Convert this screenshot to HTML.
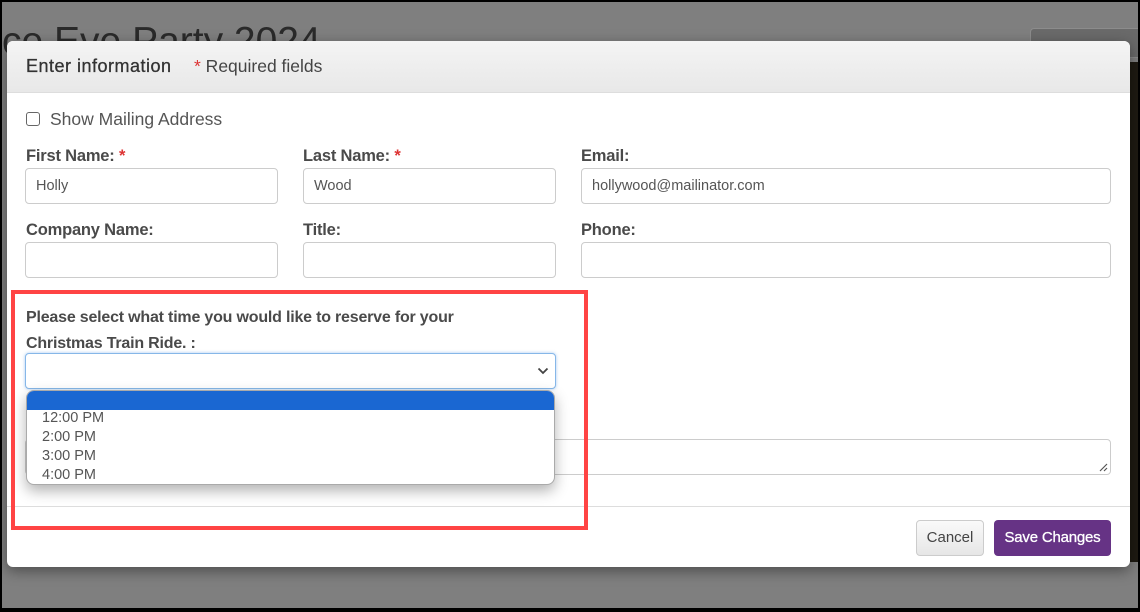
<!DOCTYPE html>
<html><head><meta charset="utf-8"><style>
*{box-sizing:border-box;margin:0;padding:0}
body{width:1140px;height:612px;overflow:hidden;background:#000;font-family:"Liberation Sans",sans-serif;position:relative}
.bg{position:absolute;left:2px;top:2px;width:1136px;height:606px;background:#7f7f7f;overflow:hidden}
.title{position:absolute;left:0px;top:18px;font-size:39px;color:#2a2a2a;white-space:nowrap}
.modal{position:absolute;left:7px;top:41px;width:1123px;height:526px;background:#fff;border-radius:6px;box-shadow:0 4px 14px rgba(0,0,0,.4);overflow:hidden}
.hdr{height:52px;background:linear-gradient(#f4f4f4,#e8e8e8);border-bottom:1px solid #ddd}
.a{position:absolute}
.lbl{font-weight:bold;font-size:16px;color:#4a4a4a;letter-spacing:-0.2px}
.req{color:#d33}
.inp{position:absolute;height:36px;border:1px solid #ccc;border-radius:4px;font-size:14.5px;color:#555;padding:9px 10px;background:#fff}
.opt{position:absolute;left:15px;font-size:14.5px;color:#555}
</style></head><body>
<div class="bg">
<div class="title">ce Eve Party 2024</div>
<div class="a" style="left:1028px;top:26px;width:112px;height:30px;border:1px solid #8c8c8c;border-radius:4px;background:#6a6a6a"></div>
<div class="a" style="left:1128px;top:60px;width:10px;height:500px;background:#1e1a12"></div>
</div>
<div class="modal">
<div class="hdr"></div>
<div class="a" style="left:19px;top:15px;font-size:18px;color:#333;letter-spacing:0.5px;-webkit-text-stroke:0.3px #333">Enter information</div>
<div class="a" style="left:187px;top:15px;font-size:17.5px;color:#444"><span class="req">*</span> Required fields</div>
<div class="a" style="left:19px;top:71px;width:14px;height:14px;border:1.5px solid #666;border-radius:3px"></div>
<div class="a" style="left:43px;top:68px;font-size:17.5px;color:#555">Show Mailing Address</div>
<div class="a lbl" style="left:19px;top:106px;font-size:16.5px">First Name: <span class="req">*</span></div>
<div class="a lbl" style="left:296px;top:106px;font-size:16.5px">Last Name: <span class="req">*</span></div>
<div class="a lbl" style="left:574px;top:106px;font-size:16.5px">Email:</div>
<div class="inp" style="left:18px;top:127px;width:253px">Holly</div>
<div class="inp" style="left:296px;top:127px;width:253px">Wood</div>
<div class="inp" style="left:574px;top:127px;width:530px">hollywood@mailinator.com</div>
<div class="a lbl" style="left:19px;top:180px;font-size:16.5px">Company Name:</div>
<div class="a lbl" style="left:296px;top:180px;font-size:16.5px">Title:</div>
<div class="a lbl" style="left:574px;top:180px;font-size:16.5px">Phone:</div>
<div class="inp" style="left:18px;top:201px;width:253px"></div>
<div class="inp" style="left:296px;top:201px;width:253px"></div>
<div class="inp" style="left:574px;top:201px;width:530px"></div>
<div class="a lbl" style="left:19px;top:264px;line-height:26px">Please select what time you would like to reserve for your<br>Christmas Train Ride. :</div>
<div class="inp" style="left:18px;top:312px;width:531px;height:36px;border-color:#86b7e8;box-shadow:0 0 3px rgba(80,150,230,.5)"></div>
<svg class="a" style="left:530px;top:326px" width="12" height="8" viewBox="0 0 12 8"><path d="M1.5 1.5L6 6l4.5-4.5" fill="none" stroke="#444" stroke-width="1.8"/></svg>
<div class="inp" style="left:18px;top:398px;width:1086px;height:36px"></div>
<svg class="a" style="left:1091px;top:421px" width="10" height="10"><path d="M9 2L2 9M9 6L6 9" stroke="#555" stroke-width="1.2"/></svg>
<div class="a" style="left:0;top:465px;width:1123px;border-top:1px solid #ddd"></div>
<div class="a" style="left:909px;top:479px;width:68px;height:36px;border:1px solid #ccc;border-radius:4px;background:linear-gradient(#fafafa,#e6e6e6);font-size:15px;color:#444;text-align:center;line-height:34px">Cancel</div>
<div class="a" style="left:987px;top:479px;width:117px;height:36px;border-radius:4px;background:#663385;font-size:15px;color:#fff;text-align:center;line-height:36px;letter-spacing:-0.2px;-webkit-text-stroke:0.3px #fff">Save Changes</div>
<div class="a" style="left:19px;top:349px;width:529px;height:95px;background:#fff;border:1px solid #aaa;border-radius:8px;overflow:hidden;box-shadow:0 6px 14px rgba(0,0,0,.3)">
<div style="height:19px;background:#1a67d2"></div>
<div class="opt" style="top:19px">12:00 PM</div>
<div class="opt" style="top:38px">2:00 PM</div>
<div class="opt" style="top:57px">3:00 PM</div>
<div class="opt" style="top:76px">4:00 PM</div>
</div>
</div>
<div class="a" style="left:11px;top:290px;width:577px;height:240px;border:4px solid #f44"></div>
</body></html>
